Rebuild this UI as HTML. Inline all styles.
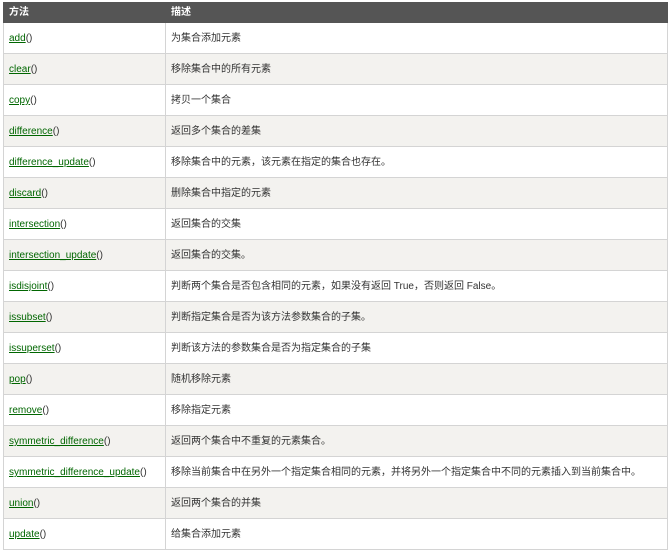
<!DOCTYPE html><html><head><meta charset="utf-8"><style>
body{margin:0;background:#fff;font-family:"Liberation Sans","Noto Sans CJK SC",sans-serif;font-size:10px;color:#333}
table{position:absolute;left:3px;top:2px;width:665px;border-collapse:collapse;table-layout:fixed}
th{background:#555;color:#fff;text-align:left;height:18px;padding:1px 5px 0;font-size:10px;font-weight:bold;border:1px solid #555;line-height:12px}
td{height:28px;padding:2px 5px 0;border:1px solid #d4d4d4;vertical-align:middle;line-height:12px}
tr:nth-child(odd) td{background:#f3f2ef}
a{color:#060;text-decoration:underline}
</style></head><body><table>
<colgroup><col style="width:162px"><col></colgroup>
<tr><th>方法</th><th>描述</th></tr>
<tr><td><a>add</a>()</td><td>为集合添加元素</td></tr>
<tr><td><a>clear</a>()</td><td>移除集合中的所有元素</td></tr>
<tr><td><a>copy</a>()</td><td>拷贝一个集合</td></tr>
<tr><td><a>difference</a>()</td><td>返回多个集合的差集</td></tr>
<tr><td><a>difference_update</a>()</td><td>移除集合中的元素，该元素在指定的集合也存在。</td></tr>
<tr><td><a>discard</a>()</td><td>删除集合中指定的元素</td></tr>
<tr><td><a>intersection</a>()</td><td>返回集合的交集</td></tr>
<tr><td><a>intersection_update</a>()</td><td>返回集合的交集。</td></tr>
<tr><td><a>isdisjoint</a>()</td><td>判断两个集合是否包含相同的元素，如果没有返回 True，否则返回 False。</td></tr>
<tr><td><a>issubset</a>()</td><td>判断指定集合是否为该方法参数集合的子集。</td></tr>
<tr><td><a>issuperset</a>()</td><td>判断该方法的参数集合是否为指定集合的子集</td></tr>
<tr><td><a>pop</a>()</td><td>随机移除元素</td></tr>
<tr><td><a>remove</a>()</td><td>移除指定元素</td></tr>
<tr><td><a>symmetric_difference</a>()</td><td>返回两个集合中不重复的元素集合。</td></tr>
<tr><td><a>symmetric_difference_update</a>()</td><td>移除当前集合中在另外一个指定集合相同的元素，并将另外一个指定集合中不同的元素插入到当前集合中。</td></tr>
<tr><td><a>union</a>()</td><td>返回两个集合的并集</td></tr>
<tr><td><a>update</a>()</td><td>给集合添加元素</td></tr>
</table></body></html>
